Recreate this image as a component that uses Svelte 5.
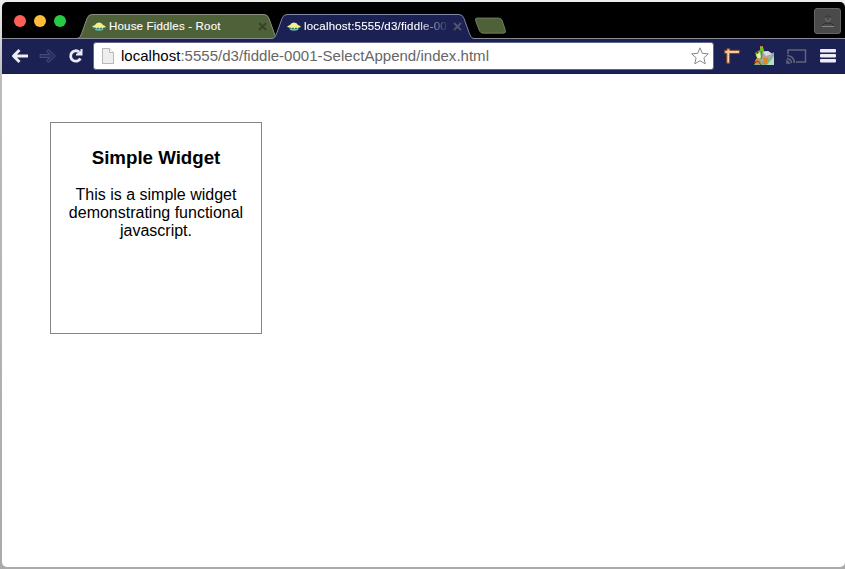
<script>
  const tabs = [
    { title: 'House Fiddles - Root', active: false },
    { title: 'localhost:5555/d3/fiddle-00', active: true }
  ];
  const lights = ['#ff5f57', '#ffbd39', '#28ca41'];
</script>

<div class="desktop">
  <div class="window">
    <header class="strip">
      <div class="lights">
        {#each lights as color}
          <span class="light" style="background:{color}"></span>
        {/each}
      </div>
      {#each tabs as tab}
        <div class="tab" class:active={tab.active}>
          <svg class="shape" width="202" height="25" viewBox="0 0 202 25">
            <path d="M0 24.500C3 24.200 3.500 22 5 18.500L10 4.500Q11.300 .5 15 .5H187Q190.700 .5 192 4.500L197 18.500C198.500 22 199 24.200 202 24.500V25H0Z" class="fill" />
            <path d="M0 24.500C3 24.200 3.500 22 5 18.500L10 4.500Q11.300 .5 15 .5H187Q190.700 .5 192 4.500L197 18.500C198.500 22 199 24.200 202 24.500" class="edge" />
            {#if !tab.active}<path d="M0 24.500H202" stroke="#8b8b95" />{/if}
          </svg>
          <svg class="fav" width="14" height="9" viewBox="0 0 14 9">
            <path d="M2 5H12L11 8Q7 9.500 3 8Z" fill="#69b9ad" />
            <path d="M0 5Q1 3.500 3 3Q4 .5 7 .5T11 3Q13 3.500 14 5Q11 6.300 7 6.200T0 5Z" fill="#f3f08b" />
            <path d="M2 6.300H12" stroke="#286c68" stroke-dasharray="2 1" />
          </svg>
          <span class="title">{tab.title}</span>
          <svg class="close" width="9" height="9" viewBox="0 0 9 9">
            <path d="M1 1L8 8M8 1L1 8" stroke-width="1.800" />
          </svg>
        </div>
      {/each}
      <svg class="newtab" width="33" height="18" viewBox="0 0 33 18">
        <path d="M3 1H24Q27 1 28 3L31.500 13.500Q32 16 29.500 16.200H9Q6.500 16 5.500 14L1.500 3.500Q1 1 3 1Z" fill="#4f6139" stroke="#899477" stroke-width=".7" />
      </svg>
      <div class="user">
        <svg width="14" height="14" viewBox="0 0 14 14" fill="none">
          <path d="M4 3Q7 .5 10 3" stroke="#393939" />
          <path d="M4.500 4Q5 7.500 7 7.500T9.500 4" stroke="#777" />
          <path d="M1 11.500Q3 9 7 9T13 11.500" stroke="#303030" />
          <path d="M1 12.500H13" stroke="#858585" />
        </svg>
      </div>
    </header>

    <nav class="toolbar">
      <svg class="back" width="18" height="16" viewBox="0 0 18 16" fill="none" stroke="#ececf5" stroke-width="3" stroke-linejoin="round">
        <path d="M8.500 2L2.500 8L8.500 14M3 8H17" />
      </svg>
      <svg class="forward" width="18" height="16" viewBox="0 0 18 16">
        <path d="M1 6.500H10.500L7.300 3.500L9.500 1.500L16.500 8L9.500 14.500L7.300 12.500L10.500 9.500H1Z" fill="#2b3063" stroke="#4b4f7e" stroke-width=".9" />
      </svg>
      <svg class="reload" width="16" height="16" viewBox="0 0 16 16">
        <path d="M11.200 4A5.200 5.200 0 1 0 12.400 10.500" fill="none" stroke="#ececf5" stroke-width="2.800" />
        <path d="M14.500 1V7.500H8V6L10 5L12.500 3V1Z" fill="#ececf5" />
      </svg>
      <div class="address">
        <svg class="page" width="12" height="16" viewBox="0 0 12 16">
          <path d="M.5.5H7.500L11.500 4.500V15.500H.5Z" fill="#eee" stroke="#b8b8b8" />
          <path d="M7.500.5V4.500H11.500" fill="#fff" stroke="#b8b8b8" />
        </svg>
        <span class="url"><b>localhost</b>:5555/d3/fiddle-0001-SelectAppend/index.html</span>
        <svg class="star" width="18" height="18" viewBox="0 0 18 18">
          <path d="M9 .8L11.300 6.300L17.300 6.800L12.900 10.800L14.200 16.800L9 13.700L3.800 16.800L5.100 10.800L.7 6.800L6.700 6.300Z" fill="#fff" stroke="#888" stroke-linejoin="round" />
        </svg>
      </div>
      <svg class="ruler" width="16" height="16" viewBox="0 0 16 16">
        <path d="M.7 2.300H3V.7H5.700V2.300H15.300V5.500H5.700V15.200H2.800V5.500H.7Z" fill="#f3c797" stroke="#884620" />
        <path d="M6 3.500H15M4.300 6V14" stroke="#ffe5c0" stroke-dasharray="1 1" />
      </svg>
      <svg class="frog" width="20" height="20" viewBox="0 0 20 20">
        <path d="M0 19L4 13L12 12L20 6V19Z" fill="#78b98c" />
        <path d="M13 19L20 10V19Z" fill="#b8debb" />
        <path d="M8 5L14 5L19 8L16 13L12 14L8 16L6 13Z" fill="#aaa7ad" />
        <path d="M9 6L14 5L18 8L12 10Z" fill="#dddade" />
        <path d="M1 7L4 5L6 4L6 1L9 1L10 4L8 8L7 13L3 12Z" fill="#73b82c" />
        <path d="M2 9L6 6L7 12L4 13Z" fill="#e2edc5" />
        <path d="M6 1H9" stroke="#e79a2e" stroke-width="1.500" />
        <circle cx="3.500" cy="6.500" r="1" fill="#a51d18" />
        <path d="M9 12L11 13L10 18M14 12L12 14V18M4 12L2 15L3 18M5 14L6 18" fill="none" stroke="#e98224" stroke-width="1.800" />
        <path d="M0 17L4 15L7 19" fill="none" stroke="#9e3820" />
        <path d="M7 5L8 9L7 13" fill="none" stroke="#48832e" />
      </svg>
      <svg class="cast" width="21" height="16" viewBox="0 0 21 16" fill="none" stroke="#626477" stroke-width="1.500">
        <path d="M2 6V2H19.500V14H10M1 7.500Q8 8 8.500 15M1 10.500Q5 11 5.500 15" />
        <path d="M1 13L3 15H1Z" fill="#626477" />
      </svg>
      <svg class="menu" width="16" height="14" viewBox="0 0 16 14">
        <g fill="#ededf5"><rect width="16" height="3.500" rx="1" /><rect y="5" width="16" height="3.500" rx="1" /><rect y="10" width="16" height="3.500" rx="1" /></g>
      </svg>
    </nav>

    <main>
      <section class="widget">
        <h3>Simple Widget</h3>
        <p>This is a simple widget demonstrating functional javascript.</p>
      </section>
    </main>
  </div>
</div>

<style>
  :global(body) { margin: 0; overflow: hidden; }
  .desktop {
    box-sizing: border-box; width: 845px; height: 569px; padding: 2px 0 2px 2px;
    background: linear-gradient(#eee, #bbb 80px, #aaa);
    font-family: "Liberation Sans", Arial, sans-serif;
  }
  .window { display: flex; flex-direction: column; height: 565px; overflow: hidden; border-radius: 5px; background: #fff; }
  svg { display: block; flex: none; }
  .strip { display: flex; box-sizing: border-box; flex: none; height: 37px; background: #000; border-bottom: 1px solid #8b8b95; }
  .lights { display: flex; gap: 8px; width: 63px; padding: 13px 0 0 12px; }
  .light { width: 12px; height: 12px; border-radius: 50%; }
  .tab { position: relative; display: flex; box-sizing: border-box; width: 202px; height: 25px; margin-top: 12px; padding: 0 13px 0 15px; align-items: center; color: #fff; flex: none; }
  .tab.active { margin-left: -7px; z-index: 1; }
  .shape { position: absolute; left: 0; top: 0; }
  .fill { fill: #4f6139; }
  .edge { fill: none; stroke: #87917b; }
  .active .fill { fill: #1c2153; }
  .active .edge { stroke: #8086a5; }
  .fav { position: relative; margin-right: 3px; }
  .title { position: relative; width: 144px; margin-bottom: 2px; white-space: nowrap; font-size: 11.500px; line-height: 18px; letter-spacing: .18px; flex: none; -webkit-text-stroke: .1px; }
  .active .title { letter-spacing: .2px; -webkit-mask-image: linear-gradient(90deg, #000 112px, transparent 146px); mask-image: linear-gradient(90deg, #000 112px, transparent 146px); }
  .close { position: relative; margin-left: 5px; stroke: #35432c; }
  .active .close { stroke: #52556d; }
  .newtab { margin: 15px 0 0 0; }
  .user { display: flex; box-sizing: border-box; width: 27px; height: 26px; margin: 6px 4px 0 auto; border: 1px solid #656565; border-radius: 3px; background: #4a4a4a; align-items: center; justify-content: center; }
  .toolbar { display: flex; align-items: center; box-sizing: border-box; flex: none; height: 35px; background: #1c2153; border-bottom: 1px solid #171b4a; padding-left: 9px; }
  .forward { margin-left: 10px; }
  .reload { margin-left: 11px; }
  .address { display: flex; align-items: center; box-sizing: border-box; width: 621px; height: 28px; margin-left: 9px; padding: 0 4px 0 8px; border: 1px solid #62668b; border-radius: 3px; background: #fff; }
  .url { margin-left: 7px; font-size: 15px; line-height: 20px; letter-spacing: .02px; color: #666; white-space: nowrap; }
  .url b { font-weight: 400; color: #000; }
  .star { margin-left: auto; }
  .ruler { margin-left: 10px; }
  .frog { margin-left: 14px; }
  .cast { margin-left: 12px; }
  .menu { margin-left: 13px; }
  main { flex: 1; padding: 48px; }
  .widget { box-sizing: border-box; width: 212px; height: 212px; padding: 24px 10px 0; border: 1px solid #858585; text-align: center; color: #000; }
  h3 { margin: 0; font-size: 18.720px; line-height: 22px; }
  p { margin: 17px 0 0; font-size: 16px; line-height: 18px; }
</style>
